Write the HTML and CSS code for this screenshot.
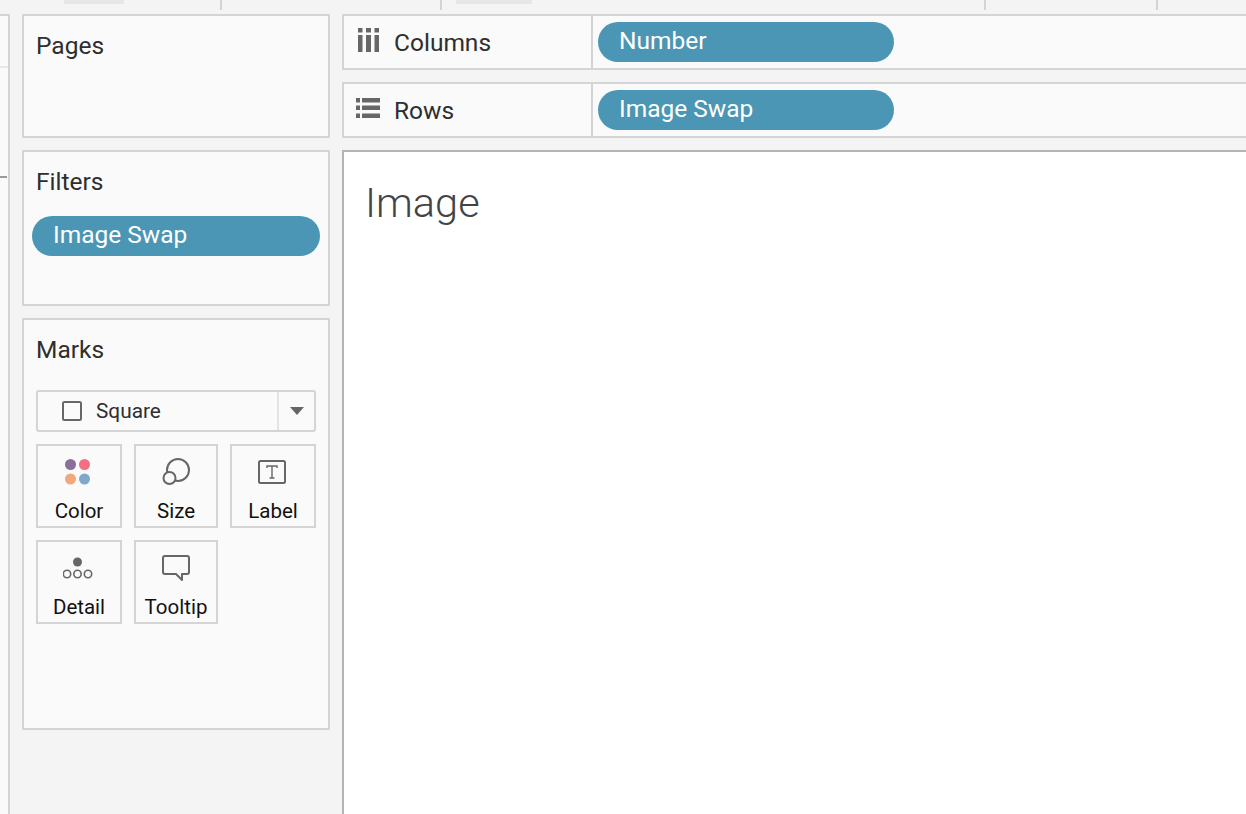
FILE: index.html
```html
<!DOCTYPE html>
<html lang="en">
<head>
<meta charset="utf-8">
<title>Image</title>
<link rel="stylesheet" href="styles.css">
</head>
<body>
<div class="app">
  <div class="topbar">
    <span></span><span class="tab"></span><span></span><span class="tick"></span>
    <span></span><span class="tick"></span><span></span><span class="tab"></span>
    <span></span><span class="tick"></span><span></span><span class="tick"></span>
  </div>
  <div class="work">
    <div class="strip">
      <div class="strip-head"></div>
      <div class="strip-mark"></div>
    </div>
    <aside class="side">
      <section class="panel pages"><h2>Pages</h2></section>
      <section class="panel filters">
        <h2>Filters</h2>
        <div class="pill filter-pill">Image Swap</div>
      </section>
      <section class="panel marks">
        <h2>Marks</h2>
        <div class="select">
          <span class="select-main">
            <svg class="sq" width="20" height="20" viewBox="0 0 20 20"><rect x="1" y="1" width="18" height="18" rx="1.5" fill="none" stroke="#666" stroke-width="2"/></svg>
            Square
          </span>
          <span class="select-arrow">
            <svg width="14" height="8" viewBox="0 0 14 8"><path d="M0 0H14L7 8Z" fill="#666"/></svg>
          </span>
        </div>
        <div class="cards">
          <div class="card">
            <div class="card-icon"><svg width="28" height="28" viewBox="0 0 28 28"><circle cx="5.500" cy="6.500" r="5.500" fill="#8a6f9b"/><circle cx="19.500" cy="6.500" r="5.500" fill="#f76e82"/><circle cx="5.500" cy="21" r="5.500" fill="#f2a77c"/><circle cx="19.500" cy="21" r="5.500" fill="#82a7cd"/></svg></div>
            <span>Color</span>
          </div>
          <div class="card">
            <div class="card-icon"><svg width="30" height="28" viewBox="0 0 30 28"><circle cx="17" cy="12" r="11" fill="none" stroke="#666" stroke-width="2"/><circle cx="8.500" cy="20" r="6" fill="#fafafa" stroke="#666" stroke-width="2"/></svg></div>
            <span>Size</span>
          </div>
          <div class="card">
            <div class="card-icon"><svg width="30" height="24" viewBox="0 0 30 24"><rect x="1" y="1" width="26" height="22" rx="1.5" fill="none" stroke="#666" stroke-width="2"/><path d="M9 8V6H19V8M14 6V18M11.500 18H16.500" fill="none" stroke="#666" stroke-width="1.400"/></svg></div>
            <span>Label</span>
          </div>
          <div class="card">
            <div class="card-icon"><svg width="32" height="24" viewBox="0 0 32 24"><circle cx="14.500" cy="6" r="4.500" fill="#666"/><circle cx="4" cy="18" r="3.700" fill="none" stroke="#666" stroke-width="1.600"/><circle cx="14.500" cy="18" r="3.700" fill="none" stroke="#666" stroke-width="1.600"/><circle cx="25" cy="18" r="3.700" fill="none" stroke="#666" stroke-width="1.600"/></svg></div>
            <span>Detail</span>
          </div>
          <div class="card">
            <div class="card-icon"><svg width="28" height="28" viewBox="0 0 28 28"><path d="M3 2H25A2 2 0 0 1 27 4V18A2 2 0 0 1 25 20H20V26L14 20H3A2 2 0 0 1 1 18V4A2 2 0 0 1 3 2Z" fill="none" stroke="#666" stroke-width="2" stroke-linejoin="round"/></svg></div>
            <span>Tooltip</span>
          </div>
        </div>
      </section>
    </aside>
    <main class="main">
      <div class="shelf">
        <div class="shelf-label">
          <span class="shelf-icon"><svg width="21" height="24" viewBox="0 0 21 24"><path d="M0 0H4.500V4.500H0ZM8 0H13V4.500H8ZM16.500 0H21V4.500H16.500ZM0 7H4.500V24H0ZM8 7H13V24H8ZM16.500 7H21V24H16.500Z" fill="#666"/></svg></span>
          Columns
        </div>
        <div class="shelf-body"><div class="pill shelf-pill">Number</div></div>
      </div>
      <div class="shelf">
        <div class="shelf-label">
          <span class="shelf-icon"><svg width="24" height="20" viewBox="0 0 24 20"><path d="M0 0H4V4.500H0ZM6 0H24V4.500H6ZM0 7.500H4V12H0ZM6 7.500H24V12H6ZM0 15.500H4V20H0ZM6 15.500H24V20H6Z" fill="#666"/></svg></span>
          Rows
        </div>
        <div class="shelf-body"><div class="pill shelf-pill">Image Swap</div></div>
      </div>
      <div class="view">
        <h1>Image</h1>
      </div>
    </main>
  </div>
</div>
</body>
</html>
```

FILE: styles.css
```css
* { box-sizing: border-box; }
html, body { margin: 0; height: 100%; overflow: hidden; }
body {
  background: #f4f4f4;
  color: #2e2e2e;
  font-family: Roboto, "Liberation Sans", sans-serif;
  font-size: 24.5px;
}
.app { display: flex; flex-direction: column; width: 1246px; height: 814px; overflow: hidden; }
.topbar {
  flex: 0 0 14px;
  display: grid;
  grid-template-columns: 64px 60px 96px 2px 218px 2px 14px 76px 452px 2px 170px 2px;
  grid-template-rows: 4px 6px;
}
.topbar .tab { background: #e6e6e6; }
.topbar .tick { background: #d4d4d4; grid-row: span 2; }
.work { flex: 1; display: flex; min-height: 0; }
.strip {
  flex: 0 0 10px;
  background: #fafafa;
  border-top: 2px solid #d4d4d4;
  border-right: 2px solid #d4d4d4;
}
.strip-head { height: 52px; border-bottom: 2px solid #e8e8e8; }
.strip-mark { width: 7px; height: 2px; margin-top: 108px; background: #999; }
.side {
  flex: 0 0 332px;
  display: flex;
  flex-direction: column;
  gap: 12px;
  padding: 0 12px;
}
.panel {
  background: #fafafa;
  border: 2px solid #d4d4d4;
  padding: 0 12px;
}
.panel h2 { margin: 0; padding-top: 16px; font-size: 24.5px; line-height: 28px; font-weight: 400; }
.pages { height: 124px; }
.filters { height: 156px; padding: 0 8px; }
.filters h2 { padding-left: 4px; }
.marks { height: 412px; }
.pill {
  background: #4a96b4;
  color: #fff;
  border-radius: 20px;
  height: 40px;
  line-height: 38px;
  padding-left: 21px;
  font-size: 24.5px;
}
.filter-pill { margin-top: 20px; }
.select {
  display: flex;
  margin-top: 26px;
  height: 42px;
  border: 2px solid #d4d4d4;
  border-radius: 3px;
}
.select-main {
  flex: 1;
  display: flex;
  align-items: center;
  gap: 14px;
  padding-left: 24px;
  font-size: 20.8px;
  border-right: 2px solid #e4e4e4;
}
.select-arrow { flex: 0 0 35px; display: flex; align-items: center; justify-content: center; }
.cards {
  display: grid;
  grid-template-columns: 86px 84px 86px;
  grid-auto-rows: 84px;
  gap: 12px;
  margin-top: 12px;
}
.card {
  display: flex;
  flex-direction: column;
  align-items: center;
  justify-content: space-between;
  padding: 10px 0 2px;
  border: 2px solid #d4d4d4;
  font-size: 20.5px;
  line-height: 26px;
  color: #111;
}
.card-icon { height: 32px; display: flex; align-items: center; justify-content: center; }
.card-icon svg { display: block; }
.main { flex: 1; min-width: 0; display: flex; flex-direction: column; gap: 12px; }
.shelf {
  display: flex;
  height: 56px;
  width: 920px;
  background: #fafafa;
  border: 2px solid #d4d4d4;
  border-right: 0;
}
.shelf-label {
  flex: 0 0 249px;
  display: flex;
  align-items: center;
  gap: 14px;
  padding-left: 12px;
  border-right: 2px solid #d4d4d4;
}
.shelf-icon { flex: 0 0 24px; display: flex; justify-content: center; margin-top: -4px; }
.shelf-body { flex: 1; padding: 6px 0 0 5px; }
.shelf-pill { width: 296px; }
.view {
  flex: 1;
  width: 920px;
  background: #fff;
  border-top: 2px solid #b4b4b4;
  border-left: 2px solid #b4b4b4;
  padding: 28px 0 0 21px;
}
.view h1 { margin: 0; font-size: 41.5px; line-height: 46px; font-weight: 300; color: #444; }
```
